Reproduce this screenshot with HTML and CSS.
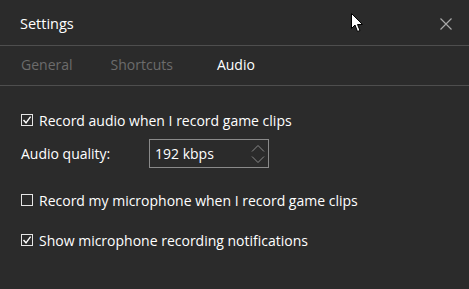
FILE: index.html
```html
<!DOCTYPE html>
<html lang="en">
<head>
    <meta charset="UTF-8">
    <title>Settings</title>
    <link rel="stylesheet" href="styles.css">
</head>
<body>
    <div class="window">
        <div class="title-bar">
            <span class="title">Settings</span>
            <button class="close-btn" aria-label="Close">
                <svg width="12" height="12" viewBox="0 0 12 12"><path d="M0.5 0.5 L11.5 11.5 M11.5 0.5 L0.5 11.5" stroke="#a8a8a8" stroke-width="1.2"/></svg>
            </button>
        </div>

        <div class="tabs">
            <span class="tab">General</span>
            <span class="tab">Shortcuts</span>
            <span class="tab active">Audio</span>
        </div>

        <div class="content">
            <label class="check-row first">
                <span class="box checked">
                    <svg width="10" height="10" viewBox="0 0 10 10"><path d="M1.5 5 L4 7.8 L8.6 1.6" stroke="#fff" stroke-width="1.4" fill="none"/></svg>
                </span>
                Record audio when I record game clips
            </label>

            <div class="quality-row">
                <span class="quality-label">Audio quality:</span>
                <div class="spinner">
                    <span class="value">192 kbps</span>
                    <span class="arrows">
                        <svg width="14" height="20" viewBox="0 0 14 20"><path d="M1 7.5 L7 1.5 L13 7.5 M1 12.5 L7 18.5 L13 12.5" stroke="#8a8a8a" stroke-width="1" fill="none"/></svg>
                    </span>
                </div>
            </div>

            <label class="check-row mic">
                <span class="box"></span>
                Record my microphone when I record game clips
            </label>

            <label class="check-row">
                <span class="box checked">
                    <svg width="10" height="10" viewBox="0 0 10 10"><path d="M1.5 5 L4 7.8 L8.6 1.6" stroke="#fff" stroke-width="1.4" fill="none"/></svg>
                </span>
                Show microphone recording notifications
            </label>
        </div>

        <svg class="cursor" width="13" height="20" viewBox="0 0 13 20"><path d="M0.5 0.5 L0.5 15.5 L4 12 L6.5 18.5 L9 17.5 L6.5 11.5 L11.5 11.5 Z" fill="#fff" stroke="#000" stroke-width="1"/></svg>
    </div>
</body>
</html>
```

FILE: styles.css
```css
* {
    margin: 0;
    padding: 0;
    box-sizing: border-box;
}

body {
    background: #2b2b2b;
    color: #ffffff;
    font-family: "Open Sans", "Noto Sans", sans-serif;
    font-size: 14px;
}

.window {
    position: relative;
    width: 469px;
    height: 289px;
    overflow: hidden;
}

.title-bar {
    height: 46px;
    display: flex;
    align-items: center;
    justify-content: space-between;
    padding: 2px 17px 0 20px;
    border-bottom: 1px solid #4e4e4e;
}

.title {
    font-size: 14.5px;
}

.close-btn {
    background: none;
    border: none;
    width: 12px;
    height: 12px;
    display: flex;
}

.tabs {
    height: 40px;
    display: flex;
    align-items: center;
    padding: 0 0 2px 21px;
    border-bottom: 1px solid #4e4e4e;
}

.tab {
    font-size: 14px;
    color: #6c6c6c;
    margin-right: 38px;
}

.tab:nth-child(2) {
    margin-right: 44px;
}

.tab.active {
    color: #ffffff;
}

.content {
    padding: 0 0 0 21px;
}

.check-row {
    display: flex;
    align-items: center;
    height: 20px;
    margin-top: 20px;
}

.check-row.first {
    margin-top: 24px;
}

.check-row.mic {
    margin-top: 22px;
}

.box {
    width: 12px;
    height: 12px;
    border: 1px solid #e6e6e6;
    margin-right: 6px;
    display: flex;
    align-items: center;
    justify-content: center;
}

.quality-row {
    display: flex;
    align-items: center;
    margin-top: 9px;
}

.quality-label {
    width: 128px;
}

.spinner {
    width: 120px;
    height: 29px;
    border: 1px solid #8a8a8a;
    display: flex;
    align-items: center;
    justify-content: space-between;
    padding: 0 3px 0 5px;
}

.arrows {
    display: flex;
}

.cursor {
    position: absolute;
    left: 351px;
    top: 13px;
}
```
